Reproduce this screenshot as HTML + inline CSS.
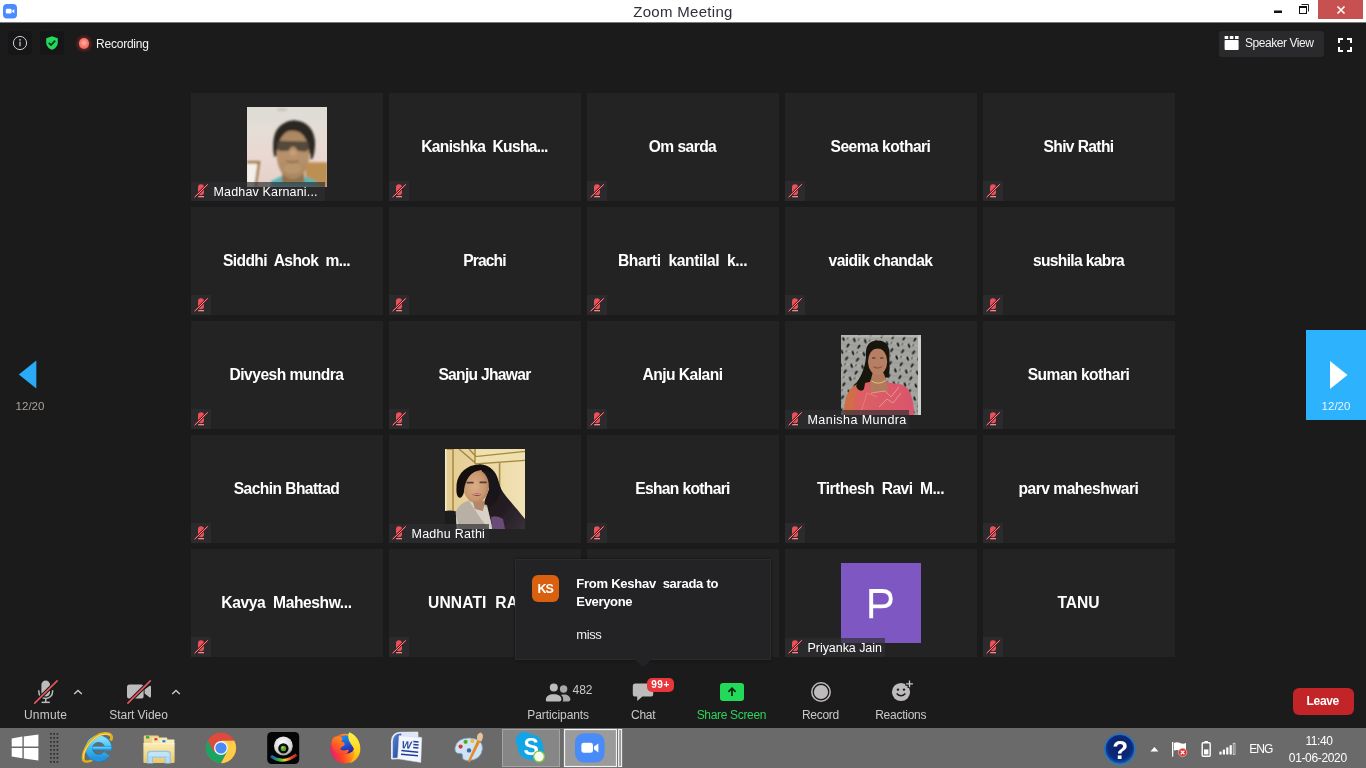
<!DOCTYPE html>
<html><head><meta charset="utf-8">
<style>
*{box-sizing:border-box;margin:0;padding:0}
html,body{width:1366px;height:768px;overflow:hidden;background:#1b1b1c;font-family:"Liberation Sans",sans-serif;}
.abs{position:absolute}
#titlebar{position:absolute;left:0;top:0;width:1366px;height:23px;background:#fff;border-bottom:1px solid #7a7a7b}
#title{position:absolute;left:0;width:1366px;top:2px;text-align:center;font-size:15px;color:#30303a;line-height:19px;letter-spacing:0.3px}
#closebtn{position:absolute;left:1318px;top:0;width:45px;height:19px;background:#c75050}
.tile{position:absolute;width:192px;height:108px;background:#232324}
.tile .nm{position:absolute;left:-0.5px;width:192px;top:44px;height:20px;line-height:20px;text-align:center;color:#fff;font-weight:bold;font-size:15.6px;white-space:pre}
.mute{position:absolute;left:0;top:88px;width:20px;height:20px;background:#2b2b2d}
.mute svg{position:absolute;left:0;top:0}
.lbl{position:absolute;left:0;top:88.6px;height:19.2px;background:rgba(46,46,50,0.68);color:#fff;font-size:12.5px;line-height:21px;padding-left:22.5px;white-space:pre}
.photo{position:absolute;left:56px;top:14px;width:80px;height:80px;overflow:hidden}
#taskbar{position:absolute;left:0;top:728px;width:1366px;height:40px;background:#6a6a6a}
.tb{position:absolute;color:#c9c9c9;font-size:12px;line-height:14px;white-space:pre}
</style></head><body>
<div id="root" style="position:absolute;left:0;top:0;width:1366px;height:768px;will-change:transform">
<div id="titlebar"><div id="title">Zoom Meeting</div><div id="closebtn"></div></div>

<!-- window controls -->
<svg class="abs" style="left:0;top:0" width="1366" height="23" viewBox="0 0 1366 23">
 <rect x="3" y="4" width="14" height="14.4" rx="4" fill="#4a8cff"/>
 <rect x="5.8" y="8.8" width="5.8" height="4.8" rx="1.3" fill="#fff"/>
 <path d="M12 10.8 L14.3 9.2 L14.3 13.2 L12 11.6 Z" fill="#fff"/>
 <rect x="1274" y="10.5" width="8" height="2.5" fill="#111"/>
 <path d="M1301.5 4.5 H1308.5 V11.5" fill="none" stroke="#222" stroke-width="1"/>
 <rect x="1299.5" y="6.5" width="7" height="7" fill="#fff" stroke="#111" stroke-width="1"/>
 <rect x="1299" y="6" width="8" height="2" fill="#111"/>
 <path d="M1337.5 6.5 L1344.5 13.5 M1344.5 6.5 L1337.5 13.5" stroke="#fff" stroke-width="1.6"/>
</svg>
<!-- top-left meeting icons -->
<div class="abs" style="left:8px;top:31px;width:24px;height:24px;border-radius:4px;background:#161618"></div>
<svg class="abs" style="left:8px;top:31px" width="24" height="24" viewBox="0 0 24 24"><circle cx="12" cy="12" r="6.6" fill="none" stroke="#cfcfcf" stroke-width="1"/><rect x="11.4" y="10.6" width="1.2" height="4.6" fill="#cfcfcf"/><circle cx="12" cy="8.9" r="0.8" fill="#cfcfcf"/></svg>
<div class="abs" style="left:40px;top:31px;width:24px;height:24px;border-radius:4px;background:#161618"></div>
<svg class="abs" style="left:40px;top:31px" width="24" height="24" viewBox="0 0 24 24"><path d="M12 5.2 L17.8 7.2 V11.5 C17.8 15 15.3 17.6 12 18.8 C8.7 17.6 6.2 15 6.2 11.5 V7.2 Z" fill="#23d959"/><path d="M8.8 11.8 L11 14 L15.2 9.6" fill="none" stroke="#13301c" stroke-width="1.7"/></svg>
<div class="abs" style="left:78.7px;top:38.2px;width:10.6px;height:10.6px;border-radius:50%;background:radial-gradient(circle at 50% 45%, #ffb9b0 0, #fa7a70 45%, #ec5148 100%);box-shadow:0 0 3.5px 1.6px rgba(190,50,35,0.55)"></div>
<div class="abs" style="left:96px;top:36px;font-size:12px;line-height:16px;color:#f2f2f2;letter-spacing:-0.22px">Recording</div>
<!-- speaker view -->
<div class="abs" style="left:1219px;top:31px;width:105px;height:26px;border-radius:3px;background:#2a2a2d"></div>
<svg class="abs" style="left:1224px;top:35px" width="16" height="16" viewBox="0 0 16 16"><rect x="0.6" y="1" width="3.6" height="3" fill="#fff"/><rect x="5.8" y="1" width="3.6" height="3" fill="#fff"/><rect x="11" y="1" width="3.6" height="3" fill="#fff"/><rect x="0.6" y="5" width="14" height="10" rx="0.8" fill="#fff"/></svg>
<div class="abs" style="left:1245px;top:35px;font-size:12px;line-height:16px;color:#f2f2f2;white-space:pre;letter-spacing:-0.45px">Speaker View</div>
<svg class="abs" style="left:1338px;top:38px" width="14" height="14" viewBox="0 0 14 14"><path d="M1 5 V1 H5 M9 1 H13 V5 M13 9 V13 H9 M5 13 H1 V9" fill="none" stroke="#fff" stroke-width="2"/></svg>
<!-- nav arrows -->
<svg class="abs" style="left:0;top:330px" width="60" height="90" viewBox="0 0 60 90"><path d="M18.8 44.5 L36.3 30.5 V58.5 Z" fill="#2aabf7"/></svg>
<div class="abs" style="left:0;top:399px;width:60px;text-align:center;font-size:11.5px;line-height:14px;color:#a8a29a">12/20</div>
<div class="abs" style="left:1306px;top:330px;width:60px;height:90px;background:#2db2fe"></div>
<svg class="abs" style="left:1306px;top:330px" width="60" height="90" viewBox="0 0 60 90"><path d="M41.5 45 L24 31 V59 Z" fill="#fff"/></svg>
<div class="abs" style="left:1306px;top:399px;width:60px;text-align:center;font-size:11.5px;line-height:14px;color:#eaf6ff">12/20</div>
<!--TILES-START-->
<div class="tile" style="left:191px;top:93px"><div class="photo"><svg width="80" height="80" viewBox="0 0 80 80"><defs><linearGradient id="p1bg" x1="0" y1="0" x2="0" y2="1"><stop offset="0" stop-color="#dddcd5"/><stop offset="0.3" stop-color="#e4ddd6"/><stop offset="0.6" stop-color="#ead8d2"/><stop offset="1" stop-color="#e4d0c9"/></linearGradient><linearGradient id="p1f" x1="0" y1="0" x2="0" y2="1"><stop offset="0" stop-color="#a98562"/><stop offset="0.55" stop-color="#b8926c"/><stop offset="1" stop-color="#a88660"/></linearGradient><filter id="p1bl" x="-10%" y="-10%" width="120%" height="120%"><feGaussianBlur stdDeviation="0.85"/></filter></defs>
<rect width="80" height="80" fill="url(#p1bg)"/>
<g filter="url(#p1bl)">
<ellipse cx="35" cy="2.6" rx="5" ry="1.5" fill="#c4c2bb"/>
<path d="M0 54 H13.4 L9.6 80 H0 Z" fill="#9c7642"/>
<path d="M0 56.6 H10.6 L7.4 80 H0 Z" fill="#f3f0ea"/>
<rect x="58.6" y="55.2" width="22" height="25" fill="#bc8f52"/>
<rect x="58.6" y="55.2" width="22" height="1.2" fill="#caa06a"/>
<path d="M24 80 V74 Q31 70.6 36 68.4 L41 75 H56 L58.4 69.6 Q65 72 70 75 V80 Z" fill="#5ab6ba"/>
<path d="M36 58 L34.6 76 H57.6 L56.6 58 Z" fill="#8f6f4c"/>
<ellipse cx="47" cy="34" rx="20.4" ry="20.4" fill="#2a2820"/><ellipse cx="46" cy="47.6" rx="16.4" ry="24.6" fill="url(#p1f)"/>
<path d="M27.4 50 C23.6 33 29 14.4 47 13.6 C63 13.8 70.6 28 67.4 44.6 C66.6 50.6 65 53.6 63.4 52 C63.8 44 62.6 36 60 31.6 C54 22 40 21 33.4 28 C30.4 34 29.6 42 29.6 49 Z" fill="#2a2820"/>
<path d="M29.4 36.2 Q29.4 33.6 32 33.8 L60 34.4 Q62.6 34.6 62.4 37 L61.8 41.6 Q61 44.6 57 44.4 L52 44 Q49.6 43.6 48.6 40.4 Q46 38.6 43.6 40.4 Q42.6 43.6 40 44 L34 44 Q30.6 43.8 30 41 Z" fill="#463d33" opacity="0.86"/>
<ellipse cx="46" cy="45.6" rx="3.4" ry="3.2" fill="#c69e78"/>
<path d="M39.4 54 Q45.6 56.2 52 54" fill="none" stroke="#7c573c" stroke-width="1.3"/>
<ellipse cx="45.6" cy="62" rx="9" ry="5" fill="#bd9870" opacity="0.7"/>
</g>
</svg></div><div class="lbl" style="width:134px;letter-spacing:0.16px">Madhav Karnani...</div><div class="mute" style="background:none"><svg width="20" height="20" viewBox="0 0 20 20"><rect x="7" y="3.3" width="6" height="11" rx="3" fill="#ec5058"/><rect x="7.2" y="15" width="5.8" height="1.3" fill="#f08a8a"/><line x1="3.6" y1="16.2" x2="16.8" y2="3.4" stroke="#5c1a1e" stroke-width="2.4"/><line x1="3.6" y1="16.2" x2="16.8" y2="3.4" stroke="#f2909a" stroke-width="1"/></svg></div></div>
<div class="tile" style="left:389px;top:93px"><div class="nm" style="letter-spacing:-0.68px">Kanishka  Kusha...</div><div class="mute"><svg width="20" height="20" viewBox="0 0 20 20"><rect x="7" y="3.3" width="6" height="11" rx="3" fill="#ec5058"/><rect x="7.2" y="15" width="5.8" height="1.3" fill="#f08a8a"/><line x1="3.6" y1="16.2" x2="16.8" y2="3.4" stroke="#5c1a1e" stroke-width="2.4"/><line x1="3.6" y1="16.2" x2="16.8" y2="3.4" stroke="#f2909a" stroke-width="1"/></svg></div></div>
<div class="tile" style="left:587px;top:93px"><div class="nm" style="letter-spacing:-0.56px">Om sarda</div><div class="mute"><svg width="20" height="20" viewBox="0 0 20 20"><rect x="7" y="3.3" width="6" height="11" rx="3" fill="#ec5058"/><rect x="7.2" y="15" width="5.8" height="1.3" fill="#f08a8a"/><line x1="3.6" y1="16.2" x2="16.8" y2="3.4" stroke="#5c1a1e" stroke-width="2.4"/><line x1="3.6" y1="16.2" x2="16.8" y2="3.4" stroke="#f2909a" stroke-width="1"/></svg></div></div>
<div class="tile" style="left:785px;top:93px"><div class="nm" style="letter-spacing:-0.52px">Seema kothari</div><div class="mute"><svg width="20" height="20" viewBox="0 0 20 20"><rect x="7" y="3.3" width="6" height="11" rx="3" fill="#ec5058"/><rect x="7.2" y="15" width="5.8" height="1.3" fill="#f08a8a"/><line x1="3.6" y1="16.2" x2="16.8" y2="3.4" stroke="#5c1a1e" stroke-width="2.4"/><line x1="3.6" y1="16.2" x2="16.8" y2="3.4" stroke="#f2909a" stroke-width="1"/></svg></div></div>
<div class="tile" style="left:983px;top:93px"><div class="nm" style="letter-spacing:-0.62px">Shiv Rathi</div><div class="mute"><svg width="20" height="20" viewBox="0 0 20 20"><rect x="7" y="3.3" width="6" height="11" rx="3" fill="#ec5058"/><rect x="7.2" y="15" width="5.8" height="1.3" fill="#f08a8a"/><line x1="3.6" y1="16.2" x2="16.8" y2="3.4" stroke="#5c1a1e" stroke-width="2.4"/><line x1="3.6" y1="16.2" x2="16.8" y2="3.4" stroke="#f2909a" stroke-width="1"/></svg></div></div>
<div class="tile" style="left:191px;top:207px"><div class="nm" style="letter-spacing:-0.63px">Siddhi  Ashok  m...</div><div class="mute"><svg width="20" height="20" viewBox="0 0 20 20"><rect x="7" y="3.3" width="6" height="11" rx="3" fill="#ec5058"/><rect x="7.2" y="15" width="5.8" height="1.3" fill="#f08a8a"/><line x1="3.6" y1="16.2" x2="16.8" y2="3.4" stroke="#5c1a1e" stroke-width="2.4"/><line x1="3.6" y1="16.2" x2="16.8" y2="3.4" stroke="#f2909a" stroke-width="1"/></svg></div></div>
<div class="tile" style="left:389px;top:207px"><div class="nm" style="letter-spacing:-0.85px">Prachi</div><div class="mute"><svg width="20" height="20" viewBox="0 0 20 20"><rect x="7" y="3.3" width="6" height="11" rx="3" fill="#ec5058"/><rect x="7.2" y="15" width="5.8" height="1.3" fill="#f08a8a"/><line x1="3.6" y1="16.2" x2="16.8" y2="3.4" stroke="#5c1a1e" stroke-width="2.4"/><line x1="3.6" y1="16.2" x2="16.8" y2="3.4" stroke="#f2909a" stroke-width="1"/></svg></div></div>
<div class="tile" style="left:587px;top:207px"><div class="nm" style="letter-spacing:-0.39px">Bharti  kantilal  k...</div><div class="mute"><svg width="20" height="20" viewBox="0 0 20 20"><rect x="7" y="3.3" width="6" height="11" rx="3" fill="#ec5058"/><rect x="7.2" y="15" width="5.8" height="1.3" fill="#f08a8a"/><line x1="3.6" y1="16.2" x2="16.8" y2="3.4" stroke="#5c1a1e" stroke-width="2.4"/><line x1="3.6" y1="16.2" x2="16.8" y2="3.4" stroke="#f2909a" stroke-width="1"/></svg></div></div>
<div class="tile" style="left:785px;top:207px"><div class="nm" style="letter-spacing:-0.57px">vaidik chandak</div><div class="mute"><svg width="20" height="20" viewBox="0 0 20 20"><rect x="7" y="3.3" width="6" height="11" rx="3" fill="#ec5058"/><rect x="7.2" y="15" width="5.8" height="1.3" fill="#f08a8a"/><line x1="3.6" y1="16.2" x2="16.8" y2="3.4" stroke="#5c1a1e" stroke-width="2.4"/><line x1="3.6" y1="16.2" x2="16.8" y2="3.4" stroke="#f2909a" stroke-width="1"/></svg></div></div>
<div class="tile" style="left:983px;top:207px"><div class="nm" style="letter-spacing:-0.65px">sushila kabra</div><div class="mute"><svg width="20" height="20" viewBox="0 0 20 20"><rect x="7" y="3.3" width="6" height="11" rx="3" fill="#ec5058"/><rect x="7.2" y="15" width="5.8" height="1.3" fill="#f08a8a"/><line x1="3.6" y1="16.2" x2="16.8" y2="3.4" stroke="#5c1a1e" stroke-width="2.4"/><line x1="3.6" y1="16.2" x2="16.8" y2="3.4" stroke="#f2909a" stroke-width="1"/></svg></div></div>
<div class="tile" style="left:191px;top:321px"><div class="nm" style="letter-spacing:-0.54px">Divyesh mundra</div><div class="mute"><svg width="20" height="20" viewBox="0 0 20 20"><rect x="7" y="3.3" width="6" height="11" rx="3" fill="#ec5058"/><rect x="7.2" y="15" width="5.8" height="1.3" fill="#f08a8a"/><line x1="3.6" y1="16.2" x2="16.8" y2="3.4" stroke="#5c1a1e" stroke-width="2.4"/><line x1="3.6" y1="16.2" x2="16.8" y2="3.4" stroke="#f2909a" stroke-width="1"/></svg></div></div>
<div class="tile" style="left:389px;top:321px"><div class="nm" style="letter-spacing:-0.69px">Sanju Jhawar</div><div class="mute"><svg width="20" height="20" viewBox="0 0 20 20"><rect x="7" y="3.3" width="6" height="11" rx="3" fill="#ec5058"/><rect x="7.2" y="15" width="5.8" height="1.3" fill="#f08a8a"/><line x1="3.6" y1="16.2" x2="16.8" y2="3.4" stroke="#5c1a1e" stroke-width="2.4"/><line x1="3.6" y1="16.2" x2="16.8" y2="3.4" stroke="#f2909a" stroke-width="1"/></svg></div></div>
<div class="tile" style="left:587px;top:321px"><div class="nm" style="letter-spacing:-0.53px">Anju Kalani</div><div class="mute"><svg width="20" height="20" viewBox="0 0 20 20"><rect x="7" y="3.3" width="6" height="11" rx="3" fill="#ec5058"/><rect x="7.2" y="15" width="5.8" height="1.3" fill="#f08a8a"/><line x1="3.6" y1="16.2" x2="16.8" y2="3.4" stroke="#5c1a1e" stroke-width="2.4"/><line x1="3.6" y1="16.2" x2="16.8" y2="3.4" stroke="#f2909a" stroke-width="1"/></svg></div></div>
<div class="tile" style="left:785px;top:321px"><div class="photo"><svg width="80" height="80" viewBox="0 0 80 80"><defs><pattern id="p2lace" width="11" height="13" patternUnits="userSpaceOnUse" patternTransform="rotate(6)"><rect width="11" height="13" fill="#a3a39f"/><rect x="0" y="2" width="11" height="1" fill="#b2b2ae"/><rect x="0" y="8.4" width="11" height="1" fill="#979793"/><ellipse cx="2.8" cy="3.6" rx="1.1" ry="2.4" transform="rotate(-24 2.8 3.6)" fill="#1e1e1c"/><ellipse cx="8" cy="9.8" rx="1.1" ry="2.4" transform="rotate(28 8 9.8)" fill="#262624"/><ellipse cx="7" cy="2.6" rx="0.7" ry="1.3" transform="rotate(40 7 2.6)" fill="#55554f"/></pattern><linearGradient id="p2s" x1="0" y1="0" x2="1" y2="0"><stop offset="0" stop-color="#d06a4c"/><stop offset="0.22" stop-color="#dc5f64"/><stop offset="1" stop-color="#d9566c"/></linearGradient><filter id="p2bl" x="-10%" y="-10%" width="120%" height="120%"><feGaussianBlur stdDeviation="0.6"/></filter></defs>
<rect width="80" height="80" fill="url(#p2lace)"/>
<rect x="77" y="0" width="3" height="80" fill="#cfcfcc"/>
<rect x="0" y="0" width="80" height="2.4" fill="#bdbdb8" opacity="0.7"/>
<g filter="url(#p2bl)">
<path d="M25 22 C24 9 30 5.6 36.6 5.6 C45 5.6 49.6 11 48.4 22 C48.6 30 49 38 47.4 42 L40 44 L30 44 C28 50 27 56 23.6 60 C20 56 15.6 54 13.6 50 C19 44 24 34 25 22 Z" fill="#17130f"/>
<path d="M3 80 C3 64 7 53 16 49.6 L31 46.4 L42 46.4 L60 49.4 C69 52 72.6 62 73 80 Z" fill="url(#p2s)"/>
<path d="M3 80 C3 64 7 53 16 49.6 L18 52 C13 60 12.6 70 13 80 Z" fill="#cf6e48"/>
<path d="M31.6 38 H42.6 L46 47 L47 57 H29.4 L29 48 Z" fill="#b27a5c"/>
<ellipse cx="36.6" cy="26.6" rx="9.6" ry="13.4" fill="#b67e62"/>
<path d="M26.6 22 C26 11 31 8 36.6 8 C43 8 47.4 11.4 47 21 C44 15 40 13.4 36 13.6 C31.6 13.8 28.4 16 26.6 22 Z" fill="#17130f"/>
<path d="M27 24 C25 34 25.6 44 23 54 C20 58 16 54 15 51 C20 44 24.6 34 25.4 22 Z" fill="#17130f"/>
<path d="M30.6 46 Q37 50.6 44.6 45.6" fill="none" stroke="#e2c27a" stroke-width="1"/>
<path d="M32.4 31.6 Q36.6 34.4 41 31.6" fill="none" stroke="#8a4a40" stroke-width="1.1"/>
<path d="M31 23 H34.4 M39 23 H42.4" stroke="#3a2a24" stroke-width="1.1"/>
<path d="M30 58 L44 56 L50 62 L58 52 M38 72 L46 64 L52 68 L60 58" fill="none" stroke="#eaa79a" stroke-width="0.9" opacity="0.85"/>
<path d="M19 80 L26 58 L36 62" fill="none" stroke="#e8a090" stroke-width="0.8" opacity="0.6"/>
</g>
</svg></div><div class="lbl" style="width:124px;letter-spacing:0.44px">Manisha Mundra</div><div class="mute" style="background:none"><svg width="20" height="20" viewBox="0 0 20 20"><rect x="7" y="3.3" width="6" height="11" rx="3" fill="#ec5058"/><rect x="7.2" y="15" width="5.8" height="1.3" fill="#f08a8a"/><line x1="3.6" y1="16.2" x2="16.8" y2="3.4" stroke="#5c1a1e" stroke-width="2.4"/><line x1="3.6" y1="16.2" x2="16.8" y2="3.4" stroke="#f2909a" stroke-width="1"/></svg></div></div>
<div class="tile" style="left:983px;top:321px"><div class="nm" style="letter-spacing:-0.52px">Suman kothari</div><div class="mute"><svg width="20" height="20" viewBox="0 0 20 20"><rect x="7" y="3.3" width="6" height="11" rx="3" fill="#ec5058"/><rect x="7.2" y="15" width="5.8" height="1.3" fill="#f08a8a"/><line x1="3.6" y1="16.2" x2="16.8" y2="3.4" stroke="#5c1a1e" stroke-width="2.4"/><line x1="3.6" y1="16.2" x2="16.8" y2="3.4" stroke="#f2909a" stroke-width="1"/></svg></div></div>
<div class="tile" style="left:191px;top:435px"><div class="nm" style="letter-spacing:-0.57px">Sachin Bhattad</div><div class="mute"><svg width="20" height="20" viewBox="0 0 20 20"><rect x="7" y="3.3" width="6" height="11" rx="3" fill="#ec5058"/><rect x="7.2" y="15" width="5.8" height="1.3" fill="#f08a8a"/><line x1="3.6" y1="16.2" x2="16.8" y2="3.4" stroke="#5c1a1e" stroke-width="2.4"/><line x1="3.6" y1="16.2" x2="16.8" y2="3.4" stroke="#f2909a" stroke-width="1"/></svg></div></div>
<div class="tile" style="left:389px;top:435px"><div class="photo"><svg width="80" height="80" viewBox="0 0 80 80"><defs><linearGradient id="p3bg" x1="0" y1="0" x2="1" y2="0"><stop offset="0" stop-color="#e2cc92"/><stop offset="0.5" stop-color="#ead7a2"/><stop offset="1" stop-color="#f1e2b6"/></linearGradient><linearGradient id="p3h" x1="0" y1="0" x2="1" y2="1"><stop offset="0" stop-color="#15110f"/><stop offset="0.6" stop-color="#231c22"/><stop offset="1" stop-color="#3a3038"/></linearGradient><radialGradient id="p3f" cx="0.45" cy="0.5" r="0.6"><stop offset="0" stop-color="#dcae88"/><stop offset="0.7" stop-color="#c8966e"/><stop offset="1" stop-color="#a87a56"/></radialGradient><filter id="p3bl" x="-10%" y="-10%" width="120%" height="120%"><feGaussianBlur stdDeviation="0.7"/></filter></defs>
<rect width="80" height="80" fill="url(#p3bg)"/>
<g filter="url(#p3bl)">
<path d="M30 0 H80 V12 L30 17 Z" fill="#efe0b0"/>
<path d="M14 0 L30 13.6 M24 0 L31 7.4 M30 7.6 L80 2.4 M30 15 L80 11.4 M30 0 V15" fill="none" stroke="#a9883f" stroke-width="1.4"/>
<path d="M8 0 V62 M54.6 14 V52 M7.6 0 H0" fill="none" stroke="#b08c44" stroke-width="1.6"/>
<rect x="0" y="0" width="1.6" height="80" fill="#f3e8c4"/>
<path d="M34 15.4 C44 15 52 22 54 34 C56 44 66 52 80 70 V80 H46 L38 56 L44 40 Z" fill="url(#p3h)"/>
<path d="M0 62 Q6 61 11 62.6 L13 80 H0 Z" fill="#1a1a1e"/>
<path d="M10.6 64 C12 58 18 53 24 51.6 L42 56 L47.6 80 H12.6 Z" fill="#b9b0a5"/>
<path d="M24 52 L36 70 L44 80 H47.6 L42 58 Z" fill="#d8d1c6"/>
<path d="M11 66 L14 80 H11.6 Z" fill="#e8e4de"/>
<path d="M46 68 Q52 66 58 70 L60 80 H47 Z" fill="#6a4b78"/>
<path d="M27 50 L30 60 L38 62 L40 52 Z" fill="#b4866a"/>
<ellipse cx="31" cy="37" rx="12.8" ry="16.6" fill="url(#p3f)"/>
<path d="M19 43 C17 52 11 50 11.4 40 C11.6 38 11.4 37 11.6 35 C13 24 22 15.6 34 15.4 C43 15.6 47 20 49 27 C46 22 40 20.4 34 21.6 C26 23 20.6 30 19 41 Z" fill="#15110f"/>
<path d="M42 24 C47 28 47.6 36 46 44 L50 54 L56 40 L50 24 Z" fill="#18131a"/>
<path d="M21.6 33.6 H28.6 M34.6 33.4 H41.6" stroke="#3c2c2c" stroke-width="1.8" opacity="0.85"/>
<path d="M27 45.6 Q31.6 43.6 36.6 45.4 Q32 48.6 27 45.6 Z" fill="#9a3c40"/>
<path d="M28.4 45.4 H35.4" stroke="#e8c8c0" stroke-width="0.7"/>
</g>
</svg></div><div class="lbl" style="width:100px;letter-spacing:0.25px">Madhu Rathi</div><div class="mute" style="background:none"><svg width="20" height="20" viewBox="0 0 20 20"><rect x="7" y="3.3" width="6" height="11" rx="3" fill="#ec5058"/><rect x="7.2" y="15" width="5.8" height="1.3" fill="#f08a8a"/><line x1="3.6" y1="16.2" x2="16.8" y2="3.4" stroke="#5c1a1e" stroke-width="2.4"/><line x1="3.6" y1="16.2" x2="16.8" y2="3.4" stroke="#f2909a" stroke-width="1"/></svg></div></div>
<div class="tile" style="left:587px;top:435px"><div class="nm" style="letter-spacing:-0.66px">Eshan kothari</div><div class="mute"><svg width="20" height="20" viewBox="0 0 20 20"><rect x="7" y="3.3" width="6" height="11" rx="3" fill="#ec5058"/><rect x="7.2" y="15" width="5.8" height="1.3" fill="#f08a8a"/><line x1="3.6" y1="16.2" x2="16.8" y2="3.4" stroke="#5c1a1e" stroke-width="2.4"/><line x1="3.6" y1="16.2" x2="16.8" y2="3.4" stroke="#f2909a" stroke-width="1"/></svg></div></div>
<div class="tile" style="left:785px;top:435px"><div class="nm" style="letter-spacing:-0.53px">Tirthesh  Ravi  M...</div><div class="mute"><svg width="20" height="20" viewBox="0 0 20 20"><rect x="7" y="3.3" width="6" height="11" rx="3" fill="#ec5058"/><rect x="7.2" y="15" width="5.8" height="1.3" fill="#f08a8a"/><line x1="3.6" y1="16.2" x2="16.8" y2="3.4" stroke="#5c1a1e" stroke-width="2.4"/><line x1="3.6" y1="16.2" x2="16.8" y2="3.4" stroke="#f2909a" stroke-width="1"/></svg></div></div>
<div class="tile" style="left:983px;top:435px"><div class="nm" style="letter-spacing:-0.51px">parv maheshwari</div><div class="mute"><svg width="20" height="20" viewBox="0 0 20 20"><rect x="7" y="3.3" width="6" height="11" rx="3" fill="#ec5058"/><rect x="7.2" y="15" width="5.8" height="1.3" fill="#f08a8a"/><line x1="3.6" y1="16.2" x2="16.8" y2="3.4" stroke="#5c1a1e" stroke-width="2.4"/><line x1="3.6" y1="16.2" x2="16.8" y2="3.4" stroke="#f2909a" stroke-width="1"/></svg></div></div>
<div class="tile" style="left:191px;top:549px"><div class="nm" style="letter-spacing:-0.41px">Kavya  Maheshw...</div><div class="mute"><svg width="20" height="20" viewBox="0 0 20 20"><rect x="7" y="3.3" width="6" height="11" rx="3" fill="#ec5058"/><rect x="7.2" y="15" width="5.8" height="1.3" fill="#f08a8a"/><line x1="3.6" y1="16.2" x2="16.8" y2="3.4" stroke="#5c1a1e" stroke-width="2.4"/><line x1="3.6" y1="16.2" x2="16.8" y2="3.4" stroke="#f2909a" stroke-width="1"/></svg></div></div>
<div class="tile" style="left:389px;top:549px"><div class="nm" style="letter-spacing:0.1px;text-align:left;padding-left:39.6px">UNNATI  RATHI</div><div class="mute"><svg width="20" height="20" viewBox="0 0 20 20"><rect x="7" y="3.3" width="6" height="11" rx="3" fill="#ec5058"/><rect x="7.2" y="15" width="5.8" height="1.3" fill="#f08a8a"/><line x1="3.6" y1="16.2" x2="16.8" y2="3.4" stroke="#5c1a1e" stroke-width="2.4"/><line x1="3.6" y1="16.2" x2="16.8" y2="3.4" stroke="#f2909a" stroke-width="1"/></svg></div></div>
<div class="tile" style="left:587px;top:549px"><div class="mute"><svg width="20" height="20" viewBox="0 0 20 20"><rect x="7" y="3.3" width="6" height="11" rx="3" fill="#ec5058"/><rect x="7.2" y="15" width="5.8" height="1.3" fill="#f08a8a"/><line x1="3.6" y1="16.2" x2="16.8" y2="3.4" stroke="#5c1a1e" stroke-width="2.4"/><line x1="3.6" y1="16.2" x2="16.8" y2="3.4" stroke="#f2909a" stroke-width="1"/></svg></div></div>
<div class="tile" style="left:785px;top:549px"><div class="photo"><svg width="80" height="80" viewBox="0 0 80 80"><rect width="80" height="80" fill="#7e57c2"/><path d="M30.2 55.2 V28 H41 Q49.8 28 49.8 35.7 Q49.8 43.4 41 43.4 H31" fill="none" stroke="#fff" stroke-width="3.9"/></svg></div><div class="lbl" style="width:100px;letter-spacing:-0.05px">Priyanka Jain</div><div class="mute" style="background:none"><svg width="20" height="20" viewBox="0 0 20 20"><rect x="7" y="3.3" width="6" height="11" rx="3" fill="#ec5058"/><rect x="7.2" y="15" width="5.8" height="1.3" fill="#f08a8a"/><line x1="3.6" y1="16.2" x2="16.8" y2="3.4" stroke="#5c1a1e" stroke-width="2.4"/><line x1="3.6" y1="16.2" x2="16.8" y2="3.4" stroke="#f2909a" stroke-width="1"/></svg></div></div>
<div class="tile" style="left:983px;top:549px"><div class="nm" style="letter-spacing:-0.04px">TANU</div><div class="mute"><svg width="20" height="20" viewBox="0 0 20 20"><rect x="7" y="3.3" width="6" height="11" rx="3" fill="#ec5058"/><rect x="7.2" y="15" width="5.8" height="1.3" fill="#f08a8a"/><line x1="3.6" y1="16.2" x2="16.8" y2="3.4" stroke="#5c1a1e" stroke-width="2.4"/><line x1="3.6" y1="16.2" x2="16.8" y2="3.4" stroke="#f2909a" stroke-width="1"/></svg></div></div>
<!--TILES-END-->
<!--BOTTOM-START-->
<!-- chat popup -->
<div class="abs" style="left:515px;top:559px;width:256px;height:101px;background:#232325;border:1px solid #2b2b2d;box-shadow:0 0 3px rgba(0,0,0,0.45)"></div>
<svg class="abs" style="left:633px;top:659px" width="20" height="10" viewBox="0 0 20 10"><path d="M1 0 H19 L10 8.6 Z" fill="#232325"/></svg>
<div class="abs" style="left:532px;top:575px;width:27px;height:27px;border-radius:6px;background:#d9600f"></div>
<div class="abs" style="left:532px;top:575px;width:27px;height:27px;line-height:28px;text-align:center;color:#fff;font-weight:bold;font-size:12.5px;letter-spacing:-0.9px;text-indent:-0.5px">KS</div>
<div class="abs" style="left:576.3px;top:574.5px;font-size:13px;line-height:18px;font-weight:bold;color:#fff;white-space:pre;letter-spacing:-0.25px">From Keshav  sarada to</div>
<div class="abs" style="left:576.3px;top:592.5px;font-size:13px;line-height:18px;font-weight:bold;color:#fff;white-space:pre;letter-spacing:-0.32px">Everyone</div>
<div class="abs" style="left:576.3px;top:626px;font-size:13px;line-height:18px;color:#f0f0f0;white-space:pre;letter-spacing:-0.43px">miss</div>

<!-- zoom toolbar -->
<!-- mic -->
<svg class="abs" style="left:30px;top:676px" width="32" height="32" viewBox="0 0 32 32">
 <rect x="11.4" y="4.4" width="8.6" height="16.2" rx="4.3" fill="#bdbbbb"/>
 <path d="M8.8 14.2 V15.4 C8.8 19.6 11.8 22.4 15.7 22.4 C19.6 22.4 22.6 19.6 22.6 15.4 V14.2" fill="none" stroke="#bdbbbb" stroke-width="1.5"/>
 <rect x="15" y="22.4" width="1.5" height="3.6" fill="#bdbbbb"/>
 <rect x="11.6" y="25.6" width="8.2" height="1.5" fill="#bdbbbb"/>
 <line x1="4.2" y1="27.6" x2="27.6" y2="4.4" stroke="#1b1b1d" stroke-width="3.6"/>
 <line x1="4.2" y1="27.6" x2="27.6" y2="4.4" stroke="#e8585c" stroke-width="1.5"/>
</svg>
<svg class="abs" style="left:73px;top:688px" width="10" height="8" viewBox="0 0 10 8"><path d="M1.2 6 L5 2.4 L8.8 6" fill="none" stroke="#c9c9c9" stroke-width="1.4"/></svg>
<div class="tb" style="left:24px;top:708px;letter-spacing:0.2px">Unmute</div>
<!-- video -->
<svg class="abs" style="left:123px;top:676px" width="32" height="32" viewBox="0 0 32 32">
 <rect x="4" y="8.6" width="16.6" height="14" rx="2.6" fill="#bdbbbb"/>
 <path d="M21.6 13.6 L26.4 10 Q28 9.2 28 11 V20.2 Q28 22 26.4 21.2 L21.6 17.6 Z" fill="#bdbbbb"/>
 <line x1="4.4" y1="27.6" x2="27.8" y2="4.4" stroke="#1b1b1d" stroke-width="3.6"/>
 <line x1="4.4" y1="27.6" x2="27.8" y2="4.4" stroke="#e8585c" stroke-width="1.5"/>
</svg>
<svg class="abs" style="left:171px;top:688px" width="10" height="8" viewBox="0 0 10 8"><path d="M1.2 6 L5 2.4 L8.8 6" fill="none" stroke="#c9c9c9" stroke-width="1.4"/></svg>
<div class="tb" style="left:109.3px;top:708px;letter-spacing:-0.06px">Start Video</div>
<!-- participants -->
<svg class="abs" style="left:544px;top:680px" width="30" height="24" viewBox="0 0 30 24">
 <circle cx="19.6" cy="9" r="3.7" fill="#a9a7a7"/>
 <path d="M13.6 21.4 C13.6 16.4 16 14.4 19.8 14.4 C23.6 14.4 26.4 16.4 26.4 19.6 Q26.4 21.4 24.6 21.4 Z" fill="#a9a7a7"/>
 <circle cx="9.8" cy="7.6" r="4.5" fill="#1b1b1d"/>
 <path d="M1 21.4 C1 16 4.4 13.4 9.8 13.4 C15.2 13.4 18.4 16 18.4 19.4 Q18.4 21.8 16 21.8 H2.6 Q1 21.8 1 21.4 Z" fill="#1b1b1d" stroke="#1b1b1d" stroke-width="1.6"/>
 <circle cx="9.8" cy="7.6" r="4" fill="#bdbbbb"/>
 <path d="M1.8 20.2 C1.8 16 5 14.2 9.6 14.2 C14.2 14.2 17.4 16 17.4 19.4 Q17.4 21.4 15.4 21.4 H3.2 Q1.8 21.4 1.8 20.2 Z" fill="#bdbbbb"/>
</svg>
<div class="tb" style="left:572.6px;top:682.5px;letter-spacing:-0.08px">482</div>
<div class="tb" style="left:527.3px;top:708px;letter-spacing:-0.08px">Participants</div>
<!-- chat -->
<svg class="abs" style="left:630px;top:680px" width="28" height="24" viewBox="0 0 28 24">
 <path d="M5.4 3.4 H20.6 Q23.2 3.4 23.2 6 V14 Q23.2 16.6 20.6 16.6 H12.4 L7.2 21 V16.6 H5.4 Q2.8 16.6 2.8 14 V6 Q2.8 3.4 5.4 3.4 Z" fill="#bdbbbb"/>
</svg>
<div class="abs" style="left:646.5px;top:677.5px;width:27.5px;height:14px;border-radius:5px;background:#e8373c"></div>
<div class="abs" style="left:646.5px;top:677.5px;width:27.5px;height:14px;line-height:14.5px;text-align:center;color:#fff;font-weight:bold;font-size:10px;letter-spacing:0.6px;text-indent:0.6px">99+</div>
<div class="tb" style="left:631px;top:708px;letter-spacing:-0.29px">Chat</div>
<!-- share -->
<div class="abs" style="left:720px;top:683px;width:24px;height:18px;border-radius:3px;background:#23d959"></div>
<svg class="abs" style="left:720px;top:683px" width="24" height="18" viewBox="0 0 24 18"><path d="M12 5.4 V13 M8.4 8.8 L12 5.2 L15.6 8.8" fill="none" stroke="#0e2615" stroke-width="1.8"/></svg>
<div class="tb" style="left:696.7px;top:708px;letter-spacing:-0.33px;color:#2fd15a">Share Screen</div>
<!-- record -->
<svg class="abs" style="left:809px;top:680px" width="24" height="24" viewBox="0 0 24 24"><circle cx="12" cy="12" r="9.2" fill="none" stroke="#bdbbbb" stroke-width="1.5"/><circle cx="12" cy="12" r="7.1" fill="#bdbbbb"/></svg>
<div class="tb" style="left:802px;top:708px;letter-spacing:-0.31px">Record</div>
<!-- reactions -->
<svg class="abs" style="left:889px;top:678px" width="28" height="26" viewBox="0 0 28 26">
 <circle cx="12" cy="14" r="9.1" fill="#bdbbbb"/>
 <circle cx="9" cy="11.6" r="1.2" fill="#1b1b1d"/><circle cx="15" cy="11.6" r="1.2" fill="#1b1b1d"/>
 <path d="M7.6 15.4 Q12 20 16.4 15.4" fill="none" stroke="#1b1b1d" stroke-width="1.4"/>
 <path d="M20.5 1.6 V10 M16.3 5.8 H24.7" stroke="#1b1b1d" stroke-width="4"/>
 <path d="M20.5 2.4 V9.2 M17.1 5.8 H23.9" stroke="#c9c9c9" stroke-width="1.3"/>
</svg>
<div class="tb" style="left:875.2px;top:708px;letter-spacing:-0.26px">Reactions</div>
<!-- leave -->
<div class="abs" style="left:1293px;top:688px;width:61px;height:27px;border-radius:6px;background:#c32428"></div>
<div class="abs" style="left:1293px;top:688px;width:61px;height:27px;line-height:26.5px;text-align:center;color:#fff;font-weight:bold;font-size:12px;letter-spacing:-0.35px;text-indent:-1.5px">Leave</div>
<!--BOTTOM-END-->
<!--TASKBAR-START-->
<div id="taskbar"></div>
<svg class="abs" style="left:0;top:728px" width="1366" height="40" viewBox="0 728 1366 40">
<defs>
 <linearGradient id="ieb" x1="0" y1="0" x2="0" y2="1"><stop offset="0" stop-color="#86dcf8"/><stop offset="0.5" stop-color="#3cbcf0"/><stop offset="1" stop-color="#2494dc"/></linearGradient>
 <linearGradient id="fold" x1="0" y1="0" x2="0" y2="1"><stop offset="0" stop-color="#fbedb5"/><stop offset="1" stop-color="#ecc766"/></linearGradient>
 <linearGradient id="ffx" x1="1" y1="0.35" x2="0" y2="0.65"><stop offset="0" stop-color="#ffd22a"/><stop offset="0.35" stop-color="#ff9418"/><stop offset="0.7" stop-color="#ff3d2a"/><stop offset="1" stop-color="#e0207a"/></linearGradient><linearGradient id="ffg" x1="0" y1="0" x2="0.3" y2="1"><stop offset="0" stop-color="#1a9cf4"/><stop offset="0.6" stop-color="#2058d8"/><stop offset="1" stop-color="#2a229c"/></linearGradient><linearGradient id="ffy" x1="0" y1="0" x2="0" y2="1"><stop offset="0" stop-color="#fff44a"/><stop offset="0.6" stop-color="#ffd21e"/><stop offset="1" stop-color="#ffa616"/></linearGradient><linearGradient id="ffo" x1="0.8" y1="0" x2="0.2" y2="1"><stop offset="0" stop-color="#ff9a1c"/><stop offset="0.6" stop-color="#ff5a26"/><stop offset="1" stop-color="#f0303c"/></linearGradient>
 <radialGradient id="hlp" cx="0.5" cy="0.45" r="0.55"><stop offset="0" stop-color="#0b1f66"/><stop offset="0.7" stop-color="#0a2a7a"/><stop offset="1" stop-color="#1c6fc4"/></radialGradient>
 <radialGradient id="ball" cx="0.45" cy="0.35" r="0.7"><stop offset="0" stop-color="#ffffff"/><stop offset="0.7" stop-color="#d8d8d8"/><stop offset="1" stop-color="#8a8a8a"/></radialGradient>
 <linearGradient id="rain" x1="0" y1="0" x2="1" y2="0"><stop offset="0" stop-color="#1d4fd0"/><stop offset="0.3" stop-color="#27b04a"/><stop offset="0.55" stop-color="#e8d52a"/><stop offset="0.8" stop-color="#e8432a"/><stop offset="1" stop-color="#b32a1a"/></linearGradient>
 <linearGradient id="wordb" x1="0" y1="0" x2="1" y2="1"><stop offset="0" stop-color="#5a86d6"/><stop offset="1" stop-color="#1c3f94"/></linearGradient>
</defs>
<!-- windows logo -->
<path d="M11.7 738.4 L22.4 736.6 V746.6 H11.7 Z M23.8 736.4 L38.4 734.4 V746.6 H23.8 Z M11.7 748 H22.4 V758.2 L11.7 756.6 Z M23.8 748 H38.4 V760.4 L23.8 758.4 Z" fill="#fff"/>
<!-- grip dots -->
<g fill="#2f2f2f">
<rect x="50.0" y="733.0" width="1.7" height="1.7"/>
<rect x="53.3" y="733.0" width="1.7" height="1.7"/>
<rect x="56.6" y="733.0" width="1.7" height="1.7"/>
<rect x="50.0" y="737.0" width="1.7" height="1.7"/>
<rect x="53.3" y="737.0" width="1.7" height="1.7"/>
<rect x="56.6" y="737.0" width="1.7" height="1.7"/>
<rect x="50.0" y="741.0" width="1.7" height="1.7"/>
<rect x="53.3" y="741.0" width="1.7" height="1.7"/>
<rect x="56.6" y="741.0" width="1.7" height="1.7"/>
<rect x="50.0" y="745.0" width="1.7" height="1.7"/>
<rect x="53.3" y="745.0" width="1.7" height="1.7"/>
<rect x="56.6" y="745.0" width="1.7" height="1.7"/>
<rect x="50.0" y="749.0" width="1.7" height="1.7"/>
<rect x="53.3" y="749.0" width="1.7" height="1.7"/>
<rect x="56.6" y="749.0" width="1.7" height="1.7"/>
<rect x="50.0" y="753.0" width="1.7" height="1.7"/>
<rect x="53.3" y="753.0" width="1.7" height="1.7"/>
<rect x="56.6" y="753.0" width="1.7" height="1.7"/>
<rect x="50.0" y="757.0" width="1.7" height="1.7"/>
<rect x="53.3" y="757.0" width="1.7" height="1.7"/>
<rect x="56.6" y="757.0" width="1.7" height="1.7"/>
<rect x="50.0" y="761.0" width="1.7" height="1.7"/>
<rect x="53.3" y="761.0" width="1.7" height="1.7"/>
<rect x="56.6" y="761.0" width="1.7" height="1.7"/>
</g>
<!-- IE -->
<g>
 <path d="M83.4 760.4 Q86.6 763.2 93 759.8" fill="none" stroke="#e2b01c" stroke-width="2.2"/>
 <circle cx="98.6" cy="748.4" r="9.7" fill="none" stroke="#1a78c6" stroke-width="7.8"/>
 <circle cx="98.6" cy="748.4" r="9.7" fill="none" stroke="url(#ieb)" stroke-width="6.6"/>
 <rect x="92.6" y="746.2" width="19" height="4.2" fill="#1a78c6"/>
 <rect x="92.6" y="746.7" width="18.6" height="3.2" fill="url(#ieb)"/>
 <path d="M104.4 750.4 H113.4 V755 L108 755 Q106.4 753 104.4 752.6 Z" fill="#696969"/>
 <path d="M83.8 761 C81 754 88 741.6 95.6 736.8 C101 732.8 109.4 732.4 111.2 735.8 C112 737.4 111.4 739.2 110.4 740.4" fill="none" stroke="#e3ae18" stroke-width="2.9"/>
 <path d="M83.6 758.6 C82.4 752 89 742 96 737.4 C101 733.6 108 733.2 110 735.4" fill="none" stroke="#fde77e" stroke-width="1"/>
</g>
<!-- Folder / explorer -->
<g>
 <rect x="143.8" y="735.4" width="15" height="9" rx="1" fill="#ecd186"/>
 <rect x="146" y="736.2" width="3.2" height="2.2" fill="#1fa83c"/>
 <rect x="151.8" y="737.4" width="15.4" height="7" rx="0.8" fill="#f6e6ae"/>
 <rect x="154.4" y="738.2" width="3" height="2.1" fill="#d23a26"/>
 <rect x="159.8" y="739.4" width="14.6" height="5" rx="0.8" fill="#f9edc2"/>
 <rect x="162.4" y="740.2" width="3" height="2.1" fill="#2c78d8"/>
 <rect x="143.4" y="743.2" width="31.2" height="19.8" rx="1.2" fill="url(#fold)"/>
 <rect x="143.4" y="743.2" width="31.2" height="1" fill="#fff4cc"/>
 <path d="M147 763.6 V754 Q147 750.8 150.2 750.8 H167.6 Q170.8 750.8 170.8 754 V763.6 H164.8 V757.8 H153 V763.6 Z" fill="#8fc6ea"/>
 <path d="M148.2 755 Q148.2 752 151 752 H166.8 Q169.6 752 169.6 755 V756.6 H148.2 Z" fill="#c2e4f7"/>
 <path d="M148.2 756.6 H152 V763 H148.2 Z M165.8 756.6 H169.6 V763 H165.8 Z" fill="#b2daf2"/>
</g>
<!-- Chrome -->
<g>
 <circle cx="221" cy="748" r="15.2" fill="#de4a3c"/>
 <path d="M221 748 L207.84 755.6 A15.2 15.2 0 0 1 207.84 740.4 L213.2 744 Z" fill="#1da462"/>
 <path d="M207.84 740.4 A15.2 15.2 0 0 0 221 763.2 L228.6 750 L221 748 Z" fill="#1da462"/>
 <path d="M221 763.2 A15.2 15.2 0 0 0 234.16 740.4 H221 L228 750 Z" fill="#ffcd46"/>
 <path d="M221 748 L214 752 L207.84 740.4 A15.2 15.2 0 0 1 234.16 740.4 H221 Z" fill="#de4a3c"/>
 <circle cx="221" cy="748" r="7" fill="#f4f4f4"/>
 <circle cx="221" cy="748" r="5.6" fill="#4a8af4"/>
</g>
<!-- webcam app -->
<g>
 <rect x="267.2" y="732" width="32" height="32" rx="4.5" fill="#050505"/>
 <path d="M271 756 Q283 765 296.4 754.6" fill="none" stroke="url(#rain)" stroke-width="3"/>
 <circle cx="283.4" cy="746" r="9.4" fill="url(#ball)"/>
 <circle cx="283.4" cy="748.4" r="5.2" fill="#0c0c0c"/>
 <circle cx="283.4" cy="748.4" r="2.7" fill="#5da82a"/>
 <circle cx="282.6" cy="747.6" r="1" fill="#b6e27a"/>
</g>
<!-- Firefox -->
<g>
 <circle cx="345" cy="748.6" r="14.8" fill="url(#ffx)"/>
 <circle cx="345.8" cy="744.6" r="9.4" fill="url(#ffg)"/>
 <path d="M349.4 732.2 C356 735 361.4 742 360.2 751 C359.4 757 355 761.4 349.6 763.2 C355 757 356 750.6 352 745.4 C348.6 741 347 736.4 349.4 732.2 Z" fill="url(#ffy)"/>
 <path d="M331.6 742 C332 738.4 334 736.4 336.6 736.6 C339 735.6 341.4 736.8 342.6 738.8 L341.2 741.8 C343.6 741.8 345.2 743.2 344.6 745 C343 746.6 340.6 747 340.2 749.2 C342.4 751 346.4 750.6 348.8 749.6 C348.6 753.6 344.6 756 340.6 755 C334.6 753.6 331.2 748 331.6 742 Z" fill="url(#ffo)"/>
</g>
<!-- Word -->
<g>
 <path d="M391.6 741 Q391.8 732.8 400 732.4 L417.8 732.2 V757.6 L391.6 759 Z" fill="#dfe7f6" stroke="#f6f9ff" stroke-width="0.9"/>
 <path d="M392.8 741.4 Q393.2 734.2 400 733.6 L401.4 733.6 L398.6 757.6 L392.8 758 Z" fill="url(#wordb)"/>
 <path d="M399 735.6 L421.8 737.4 L420.8 762.4 L397.6 758.8 Z" fill="#f3f6fc" stroke="#cfd6ea" stroke-width="0.5"/>
 <text x="401.6" y="748.2" font-family="Liberation Sans" font-weight="bold" font-style="italic" font-size="10.5" fill="#2a4ba6" transform="rotate(3 401.6 748.2)">W</text>
 <g stroke="#1f3e98" stroke-width="1.5"><path d="M413.4 741.6 L418.6 742 M413.4 744.6 L418.6 745 M413.2 747.6 L418.4 748 M401.4 750.6 L418.2 752.2 M401 754.2 L418 755.8"/></g>
</g>
<!-- Paint -->
<g>
 <path d="M455 748 Q457 738 469 738 Q483 738.6 482.4 749 Q481 760 468 760.6 Q462 760.4 462.6 756.4 Q463 753 459 753.4 Q454.6 753.4 455 748 Z" fill="#cfe3f4" stroke="#7fa3c6" stroke-width="0.8"/>
 <circle cx="460.6" cy="746.6" r="2.1" fill="#d8382a"/>
 <circle cx="465.6" cy="741.8" r="2.1" fill="#4fa830"/>
 <circle cx="472.4" cy="741" r="2.1" fill="#e8c02a"/>
 <circle cx="469" cy="750.4" r="2.2" fill="#3d6aa8"/>
 <path d="M477.6 739.6 L480.6 741 L469.6 762.6 L467.6 761.8 Z" fill="#e08a2a"/>
 <path d="M477.2 740 Q476 734 480.6 732.6 Q485 734.6 481.4 741.6 Z" fill="#e9c49a"/>
</g>
<!-- Skype button -->
<rect x="502" y="729" width="58" height="38" fill="#868686"/>
<rect x="502.5" y="729.5" width="57" height="37" fill="none" stroke="#a4a4a4" stroke-width="1"/>
<g>
 <circle cx="524.4" cy="740.6" r="8.8" fill="#12a5e6"/>
 <circle cx="536" cy="753" r="8.6" fill="#12a5e6"/>
 <circle cx="530.4" cy="747" r="12.8" fill="#12a5e6"/>
 <text x="523.4" y="755.4" font-family="Liberation Sans" font-weight="bold" font-size="23" fill="#fff">S</text>
 <circle cx="539" cy="756.6" r="5.4" fill="#f6fbf0" stroke="#86c440" stroke-width="1.3"/>
</g>
<!-- Zoom button -->
<rect x="564" y="729" width="53" height="38" fill="#9b9b9b"/>
<rect x="564.5" y="729.5" width="52" height="37" fill="none" stroke="#f2f2f2" stroke-width="1.2"/>
<rect x="618.6" y="729.5" width="3" height="37" fill="#9b9b9b" stroke="#f2f2f2" stroke-width="1.1"/>
<rect x="575" y="733.2" width="29.6" height="29.4" rx="9" fill="#4a8cf7"/>
<rect x="581.4" y="742.8" width="11.6" height="10" rx="2.4" fill="#fff"/>
<path d="M594 746.6 L598.4 743.4 V752.4 L594 749.2 Z" fill="#fff"/>
<!-- help -->
<circle cx="1119.8" cy="749.3" r="15.6" fill="url(#hlp)"/>
<circle cx="1119.8" cy="749.3" r="15" fill="none" stroke="#2b86d8" stroke-width="1.2" opacity="0.8"/>
<text x="1112.2" y="758.6" font-family="Liberation Sans" font-weight="bold" font-size="26" fill="#fff">?</text>
<!-- tray arrow -->
<path d="M1150.4 751.4 L1154.4 747 L1158.4 751.4 Z" fill="#fff"/>
<!-- flag -->
<rect x="1172" y="742" width="1.3" height="14.6" fill="#fff"/>
<path d="M1174 743 Q1177 741.6 1180 743 Q1183 744.4 1186 743 V750.6 Q1183 752 1180 750.6 Q1177 749.2 1174 750.6 Z" fill="#fff"/>
<circle cx="1182.6" cy="752.4" r="4.2" fill="#e0302a" stroke="#f2d0cc" stroke-width="0.6"/>
<path d="M1180.8 750.6 L1184.4 754.2 M1184.4 750.6 L1180.8 754.2" stroke="#fff" stroke-width="1.3"/>
<!-- battery -->
<rect x="1204.4" y="741" width="3.6" height="2" fill="#fff"/>
<rect x="1202.2" y="742.8" width="8" height="13.4" rx="1" fill="none" stroke="#fff" stroke-width="1.4"/>
<rect x="1204" y="749.4" width="4.4" height="5" fill="#fff"/>
<!-- signal -->
<g fill="#fff"><rect x="1219.4" y="751.6" width="2.2" height="2.9"/><rect x="1222.8" y="749.6" width="2.2" height="4.9"/><rect x="1226.2" y="747.4" width="2.2" height="7.1"/><rect x="1229.6" y="745.2" width="2.2" height="9.3"/></g>
<rect x="1233.2" y="743.2" width="1.8" height="11.3" fill="none" stroke="#e8e8e8" stroke-width="0.7"/>
</svg>
<div class="abs" style="left:1249.3px;top:742px;font-size:12px;line-height:14px;color:#fff;letter-spacing:-1px;white-space:pre">ENG</div>
<div class="abs" style="left:1305.4px;top:734px;font-size:12px;line-height:14px;color:#fff;letter-spacing:-0.43px;white-space:pre">11:40</div>
<div class="abs" style="left:1288.8px;top:750.5px;font-size:12px;line-height:14px;color:#fff;letter-spacing:-0.34px;white-space:pre">01-06-2020</div>
<!--TASKBAR-END-->
</div>
</body></html>
